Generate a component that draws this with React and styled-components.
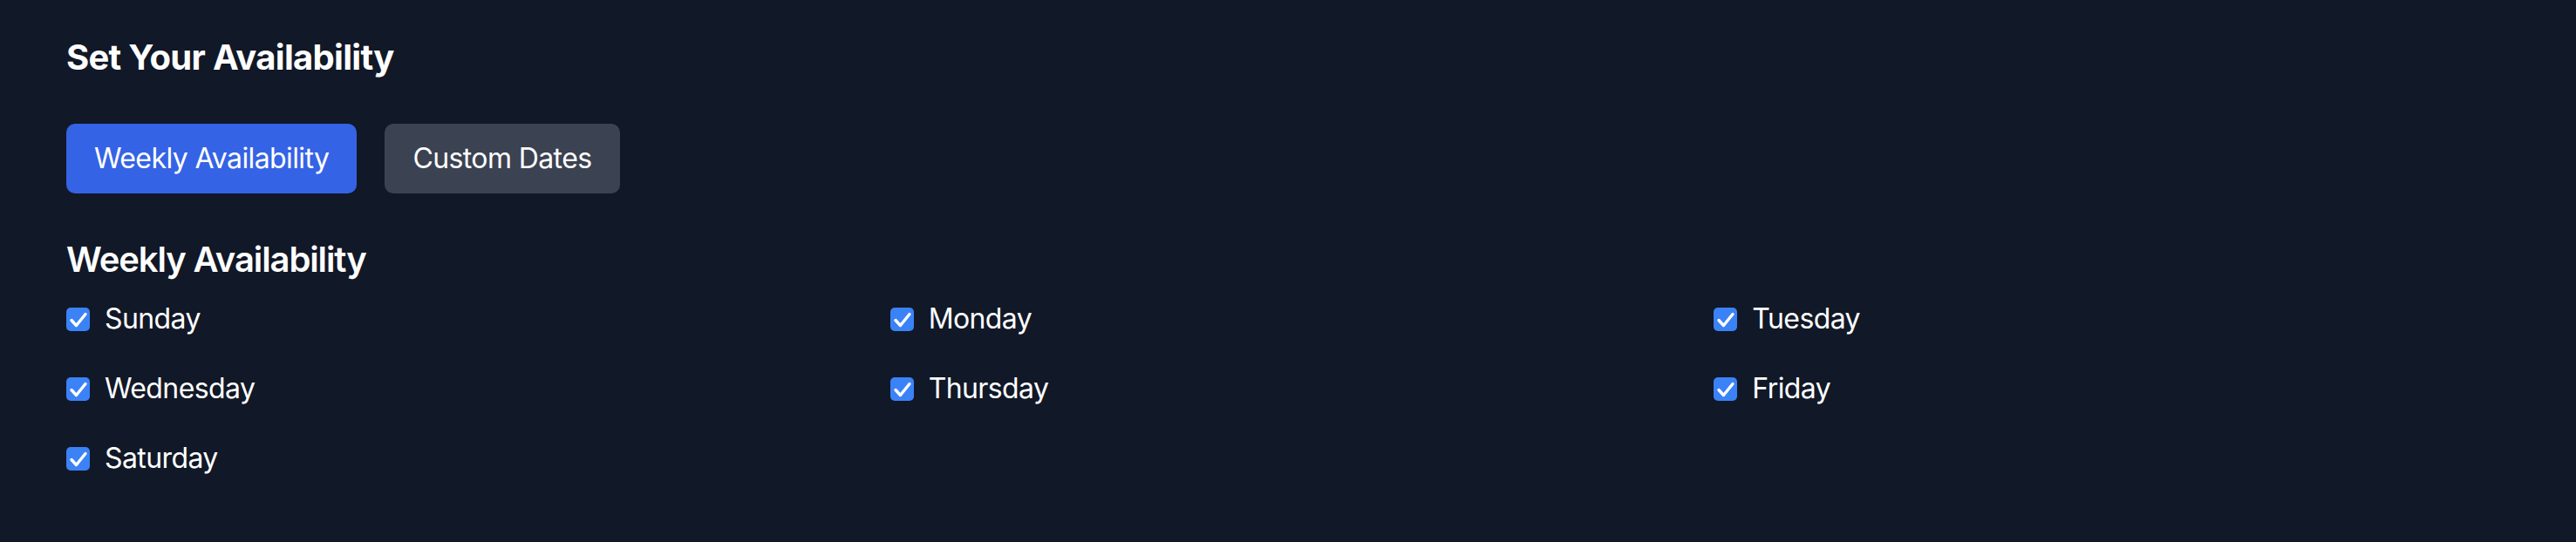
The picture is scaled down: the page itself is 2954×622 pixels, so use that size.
import React from 'react';
import styled, { createGlobalStyle } from 'styled-components';

const GlobalStyle = createGlobalStyle`
  html, body {
    margin: 0;
    padding: 0;
    background: #111827;
  }
  body {
    font-family: Inter, "Noto Sans", "Liberation Sans", sans-serif;
    color: #ffffff;
  }
`

const Page = styled.div`
  min-height: 100vh;
  box-sizing: border-box;
  padding: 38px 76px 72px;
  background: #111827;
`

const Title = styled.h2`
  margin: 0 0 48px;
  font-size: 40px;
  line-height: 56px;
  font-weight: 700;
  letter-spacing: -0.7px;
`

const Tabs = styled.div`
  display: flex;
  gap: 32px;
  margin-bottom: 48px;
`

const Tab = styled.button`
  font-family: inherit;
  font-size: 32px;
  line-height: 48px;
  letter-spacing: -0.6px;
  padding: 16px 32px;
  border: none;
  border-radius: 10px;
  color: #ffffff;
  background: ${p => (p.$active ? '#3563e5' : '#3b4252')};
  cursor: pointer;
`

const SectionTitle = styled.h3`
  margin: 0 0 16px;
  font-size: 40px;
  line-height: 56px;
  font-weight: 600;
  letter-spacing: -1.1px;
`

const DayGrid = styled.div`
  display: grid;
  grid-template-columns: repeat(3, 1fr);
  gap: 32px;
`

const DayLabel = styled.label`
  display: flex;
  align-items: center;
  gap: 17px;
  font-size: 32px;
  line-height: 48px;
  letter-spacing: -0.6px;
`

const Box = styled.span`
  display: flex;
  align-items: center;
  justify-content: center;
  width: 27px;
  height: 27px;
  border-radius: 5px;
  background: #3b82f6;
  flex-shrink: 0;
`

const days = ['Sunday', 'Monday', 'Tuesday', 'Wednesday', 'Thursday', 'Friday', 'Saturday']

function Check() {
  return (
    <Box>
      <svg width="27" height="27" viewBox="0 0 27 27">
        <polyline
          points="6,14.5 11.5,20.5 22,7.5"
          fill="none"
          stroke="#ffffff"
          strokeWidth="3.4"
          strokeLinecap="round"
          strokeLinejoin="round"
        />
      </svg>
    </Box>
  )
}

export default function App() {
  return (
    <Page>
      <GlobalStyle />
      <Title>Set Your Availability</Title>
      <Tabs>
        <Tab $active>Weekly Availability</Tab>
        <Tab>Custom Dates</Tab>
      </Tabs>
      <SectionTitle>Weekly Availability</SectionTitle>
      <DayGrid>
        {days.map(d => (
          <DayLabel key={d}>
            <Check />
            {d}
          </DayLabel>
        ))}
      </DayGrid>
    </Page>
  )
}
